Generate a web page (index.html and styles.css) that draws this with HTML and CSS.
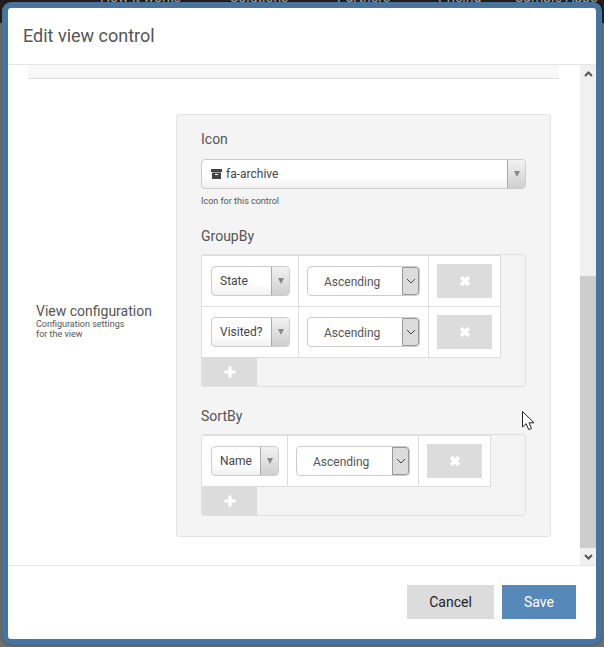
FILE: index.html
```html
<!DOCTYPE html>
<html lang="en">
<head>
<meta charset="utf-8">
<title>Edit view control</title>
<link rel="stylesheet" href="styles.css">
</head>
<body>
<div class="backdrop">
  <div class="site-nav">
    <span class="nav-a">How it works</span><span class="nav-b">Solutions</span><span class="nav-c">Partners</span><span class="nav-d">Pricing</span><span class="nav-e">Sample Apps</span>
  </div>
</div>
<div class="modal">
  <header class="modal-header"><h1 class="modal-title">Edit view control</h1></header>
  <div class="modal-body">
    <div class="scroll-content">
      <div class="top-strip"></div>
      <div class="config-row">
        <div class="config-label">
          <div class="config-title">View configuration</div>
          <div class="config-sub">Configuration settings<br>for the view</div>
        </div>
        <div class="panel">
          <div class="field-label">Icon</div>
          <div class="combo combo-wide">
            <div class="combo-text">
              <svg class="archive" viewBox="0 0 11 10" aria-hidden="true"><path d="M0 0h11v3H0z"/><path fill-rule="evenodd" d="M1 3.6h9V10H1zM4 5v1h3V5z"/></svg>
              fa-archive
            </div>
            <div class="combo-arrow"><span class="tri"></span></div>
          </div>
          <div class="help">Icon for this control</div>

          <div class="field-label group-label">GroupBy</div>
          <div class="list-box">
            <div class="list-table">
              <div class="list-row">
                <div class="cell cell-field cell-field-a">
                  <div class="combo combo-small"><div class="combo-text">State</div><div class="combo-arrow"><span class="tri"></span></div></div>
                </div>
                <div class="cell cell-order">
                  <div class="native"><span class="native-text">Ascending</span><span class="native-btn"><svg viewBox="0 0 10 6" class="chev"><path d="M1 1l4 4 4-4"/></svg></span></div>
                </div>
                <div class="cell cell-del"><button class="del-btn" type="button"><svg viewBox="0 0 10 10" class="x"><path d="M1.8 1.8l6.4 6.4M8.2 1.8L1.800 8.200"/></svg></button></div>
              </div>
              <div class="list-row">
                <div class="cell cell-field cell-field-a">
                  <div class="combo combo-small"><div class="combo-text">Visited?</div><div class="combo-arrow"><span class="tri"></span></div></div>
                </div>
                <div class="cell cell-order">
                  <div class="native"><span class="native-text">Ascending</span><span class="native-btn"><svg viewBox="0 0 10 6" class="chev"><path d="M1 1l4 4 4-4"/></svg></span></div>
                </div>
                <div class="cell cell-del"><button class="del-btn" type="button"><svg viewBox="0 0 10 10" class="x"><path d="M1.8 1.8l6.4 6.4M8.2 1.8L1.800 8.200"/></svg></button></div>
              </div>
            </div>
            <button class="add-btn" type="button"><svg viewBox="0 0 12 12" class="plus"><path d="M6 .5v11M.5 6h11"/></svg></button>
          </div>

          <div class="field-label sort-label">SortBy</div>
          <div class="list-box">
            <div class="list-table">
              <div class="list-row">
                <div class="cell cell-field cell-field-b">
                  <div class="combo combo-small combo-name"><div class="combo-text">Name</div><div class="combo-arrow"><span class="tri"></span></div></div>
                </div>
                <div class="cell cell-order cell-order-b">
                  <div class="native native-b"><span class="native-text">Ascending</span><span class="native-btn"><svg viewBox="0 0 10 6" class="chev"><path d="M1 1l4 4 4-4"/></svg></span></div>
                </div>
                <div class="cell cell-del"><button class="del-btn" type="button"><svg viewBox="0 0 10 10" class="x"><path d="M1.8 1.8l6.4 6.4M8.2 1.8L1.800 8.200"/></svg></button></div>
              </div>
            </div>
            <button class="add-btn" type="button"><svg viewBox="0 0 12 12" class="plus"><path d="M6 .5v11M.5 6h11"/></svg></button>
          </div>
        </div>
      </div>
    </div>
    <div class="scrollbar">
      <div class="sb-btn"><svg viewBox="0 0 9 6" class="sb-icon"><path d="M1 5l3.500-3.500L8 5"/></svg></div>
      <div class="sb-track"><div class="sb-thumb"></div></div>
      <div class="sb-btn"><svg viewBox="0 0 9 6" class="sb-icon"><path d="M1 1l3.500 3.500L8 1"/></svg></div>
    </div>
  </div>
  <footer class="modal-footer">
    <button class="btn btn-cancel" type="button">Cancel</button>
    <button class="btn btn-save" type="button">Save</button>
  </footer>
</div>
<svg class="cursor" viewBox="0 0 13 20" aria-hidden="true"><path d="M.5.500v15.500l3.700-3.300 2.500 5.900 2.800-1.200-2.500-5.600h5z" fill="#fff" stroke="#222" stroke-width="1"/></svg>
</body>
</html>
```
FILE: styles.css
```css
* { box-sizing: border-box; }
html, body { margin: 0; padding: 0; height: 647px; overflow: hidden; }
body {
  position: relative;
  padding: 2px;
  font-family: Roboto, "Liberation Sans", sans-serif;
  background: #6f6f6f;
  color: #555;
}
.backdrop {
  position: absolute;
  left: 0;
  top: 0;
  right: 0;
  height: 23px;
  background: #1f1f1f;
  overflow: hidden;
}
.site-nav {
  position: relative;
  top: -12px;
  height: 18px;
  font-size: 14px;
  line-height: 18px;
  color: #aaa;
}
.site-nav span { position: absolute; top: 0; white-space: nowrap; }
.nav-a { left: 100px; }
.nav-b { left: 230px; }
.nav-c { left: 337px; }
.nav-d { left: 438px; }
.nav-e { left: 515px; }

.modal {
  position: relative;
  display: flex;
  flex-direction: column;
  width: 600px;
  height: 643px;
  background: #fff;
  border: 6px solid #47739f;
  border-radius: 9px;
  overflow: hidden;
  box-shadow: 0 0 2px rgba(0,0,0,.5);
}
.modal-header {
  flex: none;
  height: 57px;
  padding: 0 15px;
  display: flex;
  align-items: center;
  border-bottom: 1px solid #e5e5e5;
}
.modal-title { margin: 0; font-size: 18px; font-weight: 400; color: #555; position: relative; top: -1px; }

.modal-body { flex: none; display: flex; height: 500px; overflow: hidden; }
.scroll-content { width: 572px; height: 500px; overflow: hidden; padding: 0 21px 0 20px; }
.top-strip { height: 14px; background: #f8f8f8; border-bottom: 1px solid #ddd; }

.config-row { display: flex; align-items: center; margin-top: 35px; }
.config-label { width: 148px; padding: 0 0 10px 8px; flex: none; }
.config-title { font-size: 14px; line-height: 16px; color: #555; }
.config-sub { font-size: 9px; line-height: 10px; color: #555; }

.panel {
  width: 375px;
  height: 423px;
  flex: none;
  padding: 15px 24px 0;
  background: #f4f4f4;
  border: 1px solid #e3e3e3;
  border-radius: 3px;
}
.field-label { font-size: 14px; line-height: 18px; color: #555; }
.group-label { margin-top: 20px; }
.sort-label { margin-top: 20px; }

.combo {
  display: flex;
  height: 30px;
  background: linear-gradient(#fff 60%, #f0f0f0);
  border: 1px solid #ccc;
  border-radius: 4px;
  overflow: hidden;
}
.combo-wide { width: 325px; margin-top: 11px; }
.combo-text {
  flex: 1;
  display: flex;
  align-items: center;
  padding-left: 9px;
  font-size: 12px;
  color: #444;
  white-space: nowrap;
}
.combo-arrow {
  flex: none;
  width: 18px;
  display: flex;
  align-items: center;
  justify-content: center;
  border-left: 1px solid #aaa;
  background: linear-gradient(#f2f2f2, #cfcfcf);
}
.tri {
  width: 0;
  height: 0;
  border-left: 3.5px solid transparent;
  border-right: 3.5px solid transparent;
  border-top: 6px solid #888;
}
.archive { width: 11px; height: 10px; margin-right: 4px; fill: #444; flex: none; }
.help { font-size: 9px; line-height: 12px; margin-top: 6px; color: #555; }

.list-box {
  width: 325px;
  margin-top: 9px;
  background: #f4f4f4;
  border: 1px solid #e0e0e0;
  border-radius: 3px;
}
.list-table { width: fit-content; background: #fff; border-top: 1px solid #ddd; }
.list-row { display: flex; height: 51px; border-bottom: 1px solid #ddd; }
.cell { display: flex; align-items: center; height: 50px; }
.cell-field { padding-left: 9px; border-right: 1px solid #ddd; }
.cell-field-a { width: 97px; }
.cell-field-b { width: 86px; }
.combo-small { width: 79px; height: 30px; }
.combo-name { width: 68px; }
.combo-small .combo-text { color: #444; padding-left: 8px; }
.cell-order { width: 130px; padding-left: 8px; border-right: 1px solid #ddd; }
.cell-order-b { width: 131px; }
.native {
  display: flex;
  width: 113px;
  height: 30px;
  background: #fff;
  border: 1px solid #ccc;
  border-radius: 4px;
  overflow: hidden;
}
.native-b { width: 114px; }
.native-text { flex: 1; display: flex; align-items: center; padding-left: 16px; font-size: 12px; color: #555; padding-top: 2px; }
.native-btn {
  flex: none;
  width: 17px;
  display: flex;
  align-items: center;
  justify-content: center;
  background: #dcdcdc;
  border: 1px solid #999;
  border-radius: 0 3px 3px 0;
}
.chev { width: 10px; height: 6px; fill: none; stroke: #444; stroke-width: 1; }
.cell-del { width: 72px; padding-left: 8px; border-right: 1px solid #ddd; }
.del-btn {
  width: 55px;
  flex: none;
  height: 34px;
  padding: 0;
  display: flex;
  align-items: center;
  justify-content: center;
  background: #dcdcdc;
  border: 0;
}
.x { width: 12px; height: 12px; fill: none; stroke: #fff; stroke-width: 3.2; }
.add-btn {
  display: flex;
  align-items: center;
  justify-content: center;
  width: 55px;
  height: 28px;
  padding: 0;
  background: #dcdcdc;
  border: 0;
}
.plus { width: 12px; height: 12px; fill: none; stroke: #fff; stroke-width: 3.2; }

.scrollbar { width: 16px; flex: none; display: flex; flex-direction: column; background: #f0f0f0; }
.sb-btn { flex: none; height: 17px; display: flex; align-items: center; justify-content: center; }
.sb-icon { width: 9px; height: 6px; fill: none; stroke: #555; stroke-width: 2; }
.sb-track { flex: 1; display: flex; flex-direction: column; justify-content: flex-end; }
.sb-thumb { height: 272px; background: #cdcdcd; }

.modal-footer {
  flex: 1;
  display: flex;
  justify-content: flex-end;
  gap: 8px;
  padding: 19px 20px 0 0;
  border-top: 1px solid #e5e5e5;
}
.btn {
  height: 34px;
  border: 0;
  font-family: inherit;
  font-size: 14px;
  padding: 0;
}
.btn-cancel { width: 87px; background: #dcdcdc; color: #222; }
.btn-save { width: 74px; background: #5688b9; color: #fff; }

.cursor { position: absolute; left: 522px; top: 411px; width: 13px; height: 20px; }
```
